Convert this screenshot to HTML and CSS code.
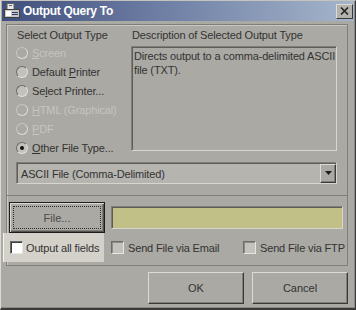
FILE: index.html
```html
<!DOCTYPE html>
<html>
<head>
  <meta charset="UTF-8" />
  <link rel="stylesheet" href="styles.css">
</head>
<body>
  <div class="window">
    <div class="titlebar">
      <svg class="app-icon" width="16" height="16" viewBox="0 0 16 16">
        <rect x="3" y="0.5" width="7" height="6" fill="#e8e8e8" stroke="#606060" />
        <rect x="5" y="2" width="3" height="1" fill="#606060" />
        <rect x="0.5" y="6.5" width="15" height="8" fill="#c8c8c8" stroke="#404040" />
        <rect x="2" y="8" width="5" height="5" fill="#ffffff" />
        <rect x="8" y="9" width="6" height="1" fill="#303a6a" />
        <rect x="8" y="11" width="6" height="1" fill="#303a6a" />
      </svg>
      <span class="title">Output Query To</span>
      <span class="close">
        <svg width="9" height="8" viewBox="0 0 9 8">
          <path d="M1 0.5 L8 7.5 M8 0.5 L1 7.5" stroke="#222" stroke-width="1.6" />
        </svg>
      </span>
    </div>

    <div class="content">
      <div class="group group-top">
        <div class="types">
          <div class="type-list">
            <div class="caption">Select Output Type</div>
            <div class="radio disabled"><span class="dot"></span><span><u>S</u>creen</span></div>
            <div class="radio"><span class="dot"></span><span>Default <u>P</u>rinter</span></div>
            <div class="radio"><span class="dot"></span><span>Se<u>l</u>ect Printer...</span></div>
            <div class="radio disabled"><span class="dot"></span><span><u>H</u>TML (Graphical)</span></div>
            <div class="radio disabled"><span class="dot"></span><span><u>P</u>DF</span></div>
            <div class="radio checked"><span class="dot"></span><span><u>O</u>ther File Type...</span></div>
          </div>
          <div class="desc">
            <div class="caption">Description of Selected Output Type</div>
            <div class="desc-box">Directs output to a comma-delimited ASCII<br>file (TXT).</div>
          </div>
        </div>
        <div class="combo">
          <span class="combo-text">ASCII File (Comma-Delimited)</span>
          <span class="combo-btn">
            <svg width="7" height="4" viewBox="0 0 7 4"><path d="M0 0 H7 L3.5 4 Z" fill="#1e1e1e" /></svg>
          </span>
        </div>
      </div>

      <div class="group group-bottom">
        <div class="file-row">
          <button class="btn btn-default"><span class="focus">File...</span></button>
          <div class="path"></div>
        </div>
        <div class="check-row">
          <div class="check check-all"><span class="box white"></span><span>Output all fields</span></div>
          <div class="check check-email"><span class="box"></span><span>Send File via Email</span></div>
          <div class="check"><span class="box"></span><span>Send File via FTP</span></div>
        </div>
      </div>

      <div class="actions">
        <button class="btn">OK</button>
        <button class="btn">Cancel</button>
      </div>
    </div>
  </div>
</body>
</html>
```

FILE: styles.css
```css
:root {
  --face: #aaa9a3;
  --text: #333333;
  --text-disabled: #c6c5c0;
  --light: #dcdbd6;
  --shadow: #7f7e7a;
  --dark: #3a3a38;
}

body {
  margin: 0;
  font-family: 'Liberation Sans', Arial, sans-serif;
  font-size: 11px;
  letter-spacing: -0.15px;
  color: var(--text);
  background: var(--face);
}

.window {
  width: 356px;
  height: 310px;
  box-sizing: border-box;
  background: var(--face);
  border-top: 1px solid #c4c3be;
  border-left: 1px solid var(--light);
  border-right: 1px solid var(--dark);
  border-bottom: 2px solid var(--dark);
  box-shadow: inset -1px -1px 0 #8a8985;
}

.titlebar {
  height: 20px;
  margin: 0 1px;
  padding-left: 2px;
  display: flex;
  align-items: center;
  background: linear-gradient(to right, #404f7c, #6e7ea4 45%, #a5b5cb);
}

.app-icon {
  flex: none;
}

.title {
  margin-left: 3px;
  font-weight: bold;
  font-size: 12px;
  letter-spacing: -0.3px;
  color: #ffffff;
}

.close {
  margin-left: auto;
  margin-right: 1px;
  width: 17px;
  height: 15px;
  box-sizing: border-box;
  display: flex;
  align-items: center;
  justify-content: center;
  background: #b3b2ad;
  border: 1px solid;
  border-color: var(--light) var(--dark) var(--dark) var(--light);
}

.content {
  padding: 3px 0 0 5px;
}

.group {
  width: 342px;
  box-sizing: border-box;
  border: 1px solid var(--shadow);
  box-shadow: inset 1px 1px 0 #c9c8c3;
}

.group-top {
  height: 172px;
  padding: 2px 10px 0 9px;
}

.group-bottom {
  height: 70px;
  border-top: none;
  box-shadow: inset 1px 0 0 #c9c8c3;
  padding-top: 6px;
}

.types {
  display: flex;
  height: 130px;
}

.type-list {
  width: 115px;
}

.caption {
  height: 16px;
  line-height: 16px;
  padding-left: 1px;
  white-space: nowrap;
}

.radio {
  height: 19px;
  display: flex;
  align-items: center;
  gap: 4px;
  white-space: nowrap;
}

.radio .dot {
  width: 12px;
  height: 12px;
  box-sizing: border-box;
  border-radius: 50%;
  border: 1px solid;
  border-color: #6d6c68 #e2e1dc #e2e1dc #6d6c68;
  background: #c2c1bc;
  display: flex;
  align-items: center;
  justify-content: center;
}

.radio.disabled {
  color: var(--text-disabled);
}

.radio.disabled .dot {
  background: var(--face);
  border-color: #c8c7c2 #dedcd7 #dedcd7 #c8c7c2;
}

.radio.checked .dot::after {
  content: '';
  width: 4px;
  height: 4px;
  border-radius: 50%;
  background: #111;
}

.desc {
  width: 206px;
}

.desc-box {
  margin-top: 3px;
  height: 105px;
  box-sizing: border-box;
  padding: 2px 2px;
  line-height: 14px;
  white-space: nowrap;
  border: 1px solid;
  border-color: var(--shadow) #d6d5d0 #d6d5d0 var(--shadow);
  box-shadow: inset 1px 1px 0 #5e5d59;
}

.combo {
  margin-top: 5px;
  height: 22px;
  box-sizing: border-box;
  display: flex;
  align-items: center;
  background: #b5b4af;
  border: 1px solid;
  border-color: var(--shadow) #d6d5d0 #d6d5d0 var(--shadow);
  box-shadow: inset 1px 1px 0 #5e5d59;
  padding: 1px 0 0 4px;
}

.combo-text {
  flex: 1;
}

.combo-btn {
  width: 16px;
  height: 19px;
  box-sizing: border-box;
  display: flex;
  align-items: center;
  justify-content: center;
  background: var(--face);
  border: 1px solid;
  border-color: var(--light) var(--dark) var(--dark) var(--light);
  box-shadow: inset -1px -1px 0 var(--shadow);
  margin-top: -1px;
}

.btn {
  width: 96px;
  height: 32px;
  box-sizing: border-box;
  padding: 0;
  font: inherit;
  color: var(--text);
  background: var(--face);
  border: 1px solid;
  border-color: var(--light) var(--dark) var(--dark) var(--light);
  box-shadow: inset -1px -1px 0 var(--shadow);
}

.file-row {
  display: flex;
  align-items: center;
  gap: 6px;
  padding-left: 2px;
  height: 31px;
}

.btn-default {
  height: 31px;
  border: 1px solid #1c1c1c;
  box-shadow: inset 1px 1px 0 var(--light), inset -1px -1px 0 #55544f, inset -2px -2px 0 var(--shadow);
  padding: 3px;
  display: flex;
  color: #4a4a4a;
}

.btn-default .focus {
  flex: 1;
  display: flex;
  align-items: center;
  justify-content: center;
  border: 1px dotted #2c2c2c;
}

.path {
  width: 232px;
  height: 23px;
  box-sizing: border-box;
  background: #c0c087;
  border: 1px solid;
  border-color: var(--shadow) #d6d5d0 #d6d5d0 var(--shadow);
  box-shadow: inset 1px 1px 0 #5e5d59;
}

.check-row {
  height: 29px;
  display: flex;
  align-items: center;
}

.check {
  display: flex;
  align-items: center;
  gap: 4px;
  white-space: nowrap;
}

.check-all {
  margin-left: -4px;
  width: 101px;
  height: 29px;
  box-sizing: border-box;
  padding-left: 6px;
  gap: 3px;
  background: #d4d1ca;
  border-left: 1px solid #f4f3ef;
}

.check-email {
  margin-left: 7px;
  width: 132px;
}

.box {
  width: 13px;
  height: 13px;
  box-sizing: border-box;
  background: #c3c2bc;
  border: 1px solid;
  border-color: #6d6c68 #e6e5e0 #e6e5e0 #6d6c68;
  box-shadow: inset 1px 1px 0 #8e8d89;
}

.box.white {
  background: #ffffff;
  box-shadow: inset 1px 1px 0 #3e3e3c;
}

.actions {
  width: 342px;
  margin-top: 6px;
  display: flex;
  justify-content: flex-end;
  gap: 8px;
}
```
